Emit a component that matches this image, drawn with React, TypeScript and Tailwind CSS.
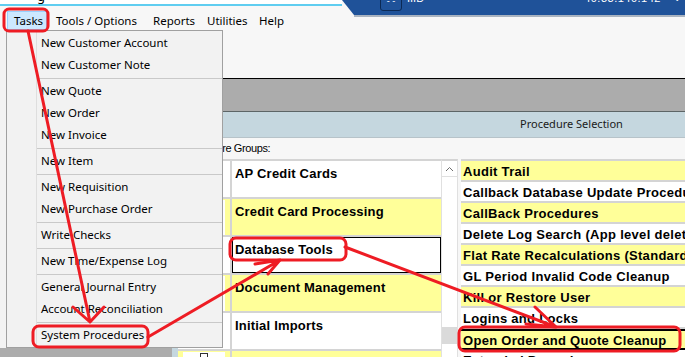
const menuItems: (string | null)[] = [
  "New Customer Account",
  "New Customer Note",
  null,
  "New Quote",
  "New Order",
  "New Invoice",
  null,
  "New Item",
  null,
  "New Requisition",
  "New Purchase Order",
  null,
  "Write Checks",
  null,
  "New Time/Expense Log",
  null,
  "General Journal Entry",
  "Account Reconciliation",
  null,
  "System Procedures",
];

const groups = [
  { name: "AP Credit Cards", yellow: false },
  { name: "Credit Card Processing", yellow: true },
  { name: "Database Tools", yellow: false, selected: true },
  { name: "Document Management", yellow: true },
  { name: "Initial Imports", yellow: false },
  { name: "Inventory", yellow: true },
];

const procedures = [
  { name: "Audit Trail", yellow: true },
  { name: "Callback Database Update Procedures", yellow: false },
  { name: "CallBack Procedures", yellow: true },
  { name: "Delete Log Search (App level delete)", yellow: false },
  { name: "Flat Rate Recalculations (Standard)", yellow: true },
  { name: "GL Period Invalid Code Cleanup", yellow: false },
  { name: "Kill or Restore User", yellow: true },
  { name: "Logins and Locks", yellow: false },
  { name: "Open Order and Quote Cleanup", yellow: true, selected: true },
  { name: "Extended Procedures", yellow: false },
];

const topMenu = [
  { label: "Tools / Options", w: "w-[97px]" },
  { label: "Reports", w: "w-[54px]" },
  { label: "Utilities", w: "w-[52px]" },
  { label: "Help", w: "w-[40px]" },
];

function Annotations() {
  const red = "#ee1c24";
  return (
    <svg
      className="absolute inset-0 pointer-events-none"
      width={685}
      height={357}
      viewBox="0 0 685 357"
      fill="none"
      stroke={red}
      strokeWidth={3}
      strokeLinecap="round"
      strokeLinejoin="round"
    >
      <rect x={4} y={9} width={44} height={22} rx={5} />
      <rect x={33} y={326} width={115} height={21} rx={6} />
      <rect x={230} y={238} width={116} height={22} rx={6} />
      <rect x={459} y={327} width={221} height={24} rx={6} />
      {/* tasks -> system procedures */}
      <path d="M28 31 L90 322 M73 307 L90 322 L104 307" />
      {/* system procedures -> database tools */}
      <path d="M148 337 L280 260 M255 264 L280 260 L268 274" />
      {/* database tools -> open order */}
      <path d="M345 247 L556 327 M535 307 L556 327 L526 324" />
    </svg>
  );
}

export default function App() {
  return (
    <div className="relative w-[685px] h-[357px] overflow-hidden bg-[#acacac] font-['Noto_Sans',sans-serif] text-black flex flex-col">
      {/* title + menu bar */}
      <div className="flex shrink-0 h-[78px] bg-[#f7f7f7]">
        <div className="w-[342px] shrink-0 flex flex-col">
          <div className="h-[4px] shrink-0 bg-white overflow-hidden">
            <div className="ml-[37px] -mt-[10px] text-[13px] leading-[12px]">g</div>
          </div>
          <div className="h-[2px] shrink-0 bg-[#5fcdf0]" />
          <div className="flex pt-[5px] pl-[7px] text-[11.5px]">
            <div className="h-[19px] w-[40px] shrink-0 pl-[6px] flex items-center bg-[#cce8ff] border border-[#99d1ff]">
              Tasks
            </div>
            <div className="w-[9px] shrink-0" />
            {topMenu.map((m) => (
              <div key={m.label} className={`h-[19px] ${m.w} shrink-0 flex items-center whitespace-nowrap`}>
                {m.label}
              </div>
            ))}
          </div>
        </div>
        <div className="flex-1 min-w-0 flex flex-col">
          <div className="h-[15px] shrink-0 bg-[#1f5299] [clip-path:polygon(0_0,100%_0,100%_100%,12px_100%)] flex overflow-hidden text-white font-['Liberation_Sans',sans-serif]">
            <div className="ml-[38px] -mt-[5px] shrink-0 w-[22px] h-[16px] rounded-[3px] border border-[#0c2a55] flex items-end justify-center text-[9px] leading-[9px] pb-[4px]">
              - -
            </div>
            <div className="ml-[5px] -mt-[8px] shrink-0 text-[11px] leading-[12px]">IIID</div>
            <div className="ml-[160px] -mt-[8px] shrink-0 text-[11px] leading-[12px] tracking-[0.5px]">40.33.140.142</div>
            <div className="ml-[12px] -mt-[8px] shrink-0 text-[10px] leading-[12px]">⌄</div>
          </div>
          <div className="h-[2px] shrink-0 ml-[12px] bg-[#a9b3c0]" />
        </div>
      </div>
      <div className="h-px shrink-0 bg-black" />
      <div className="h-[32px] shrink-0" />
      <div className="h-px shrink-0 bg-[#5d6566]" />

      {/* main panel */}
      <div className="flex flex-1 min-h-0">
        <div className="w-[172px] shrink-0" />
        <div className="flex-1 min-w-0 flex flex-col bg-[#f7f7f7] font-['Liberation_Sans',sans-serif]">
          <div className="h-[26px] shrink-0 bg-[#c5d7df] border-b border-[#b7c3c9] flex items-center pl-[348px] text-[11px] text-[#1a1a1a] font-['Noto_Sans',sans-serif]">
            Procedure Selection
          </div>
          <div className="flex-1 min-h-0 flex">
            <div className="w-[6px] shrink-0 bg-[#c5d7df]" />
            <div className="flex-1 min-w-0 flex flex-col">
              <div className="h-[21px] shrink-0 flex items-center pl-[6px] text-[11px] tracking-[-0.4px]">
                Procedure Groups:
              </div>
              <div className="flex-1 min-h-0 flex text-[13px] font-bold overflow-hidden">
                <div className="w-[263px] shrink-0 border-t-2 border-[#d4d4d4] bg-white tracking-[0.2px]">
                  {groups.map((g) => (
                    <div
                      key={g.name}
                      className={`flex h-[38px] border-b-2 border-[#d4d4d4] ${g.yellow ? "bg-[#ffff99]" : "bg-white"}`}
                    >
                      <div className="w-[54px] shrink-0 border-r-2 border-[#d4d4d4] px-[5px] pt-[1px]">
                        <div className="h-full bg-white flex items-start pl-[17px] pt-[1px]">
                          <div className="w-[8px] h-[7px] border border-[#333] bg-white" />
                        </div>
                      </div>
                      <div
                        className={`flex-1 ${g.selected ? "border border-black bg-white pl-[2px] pt-[2px]" : "pl-[3px] pt-[3px]"}`}
                      >
                        {g.name}
                      </div>
                    </div>
                  ))}
                </div>
                <div className="w-[17px] shrink-0 border-t-2 border-[#d4d4d4] bg-[#f4f4f4] border-x border-x-[#e0e0e0] flex flex-col">
                  <div className="h-[16px] shrink-0 border-b border-[#e0e0e0] bg-white flex items-center justify-center">
                    <svg width="9" height="6" viewBox="0 0 9 6" fill="none" stroke="#6d6d6d" strokeWidth="1">
                      <path d="M1 5 L4.5 1.5 L8 5" />
                    </svg>
                  </div>
                  <div className="h-[150px] shrink-0 bg-white" />
                  <div className="h-[17px] shrink-0 bg-[#dadada]" />
                  <div className="flex-1 bg-white" />
                </div>
                <div className="w-[3px] shrink-0" />
                <div className="flex-1 min-w-0 overflow-hidden border-t-2 border-[#d4d4d4] bg-white whitespace-nowrap tracking-[0.3px]">
                  {procedures.map((p) => (
                    <div
                      key={p.name}
                      className={`h-[21px] pl-[2px] pt-[2px] flex items-center ${p.yellow ? "bg-[#ffff99]" : "bg-white"} ${
                        p.selected ? "border-y-2 border-black" : "border-b-2 border-[#d4d4d4]"
                      }`}
                    >
                      {p.name}
                    </div>
                  ))}
                </div>
              </div>
            </div>
          </div>
        </div>
      </div>

      {/* open Tasks menu */}
      <div className="absolute left-0 top-[30px] w-[223px] h-[318px] bg-[#f3f3f3]">
        <div className="ml-[6px] h-full border border-[#a0a0a0] bg-[#f2f2f2] pt-px text-[11.5px]">
          <div className="ml-[29px] h-full border-l border-[#dedede]">
            {menuItems.map((m, i) =>
              m === null ? (
                <div key={i} className="h-[4px] flex items-center">
                  <div className="h-px w-full bg-[#c9c9c9]" />
                </div>
              ) : (
                <div key={i} className="h-[22px] flex items-center pl-[4px]">
                  {m}
                </div>
              ),
            )}
          </div>
        </div>
      </div>

      <Annotations />
    </div>
  );
}
